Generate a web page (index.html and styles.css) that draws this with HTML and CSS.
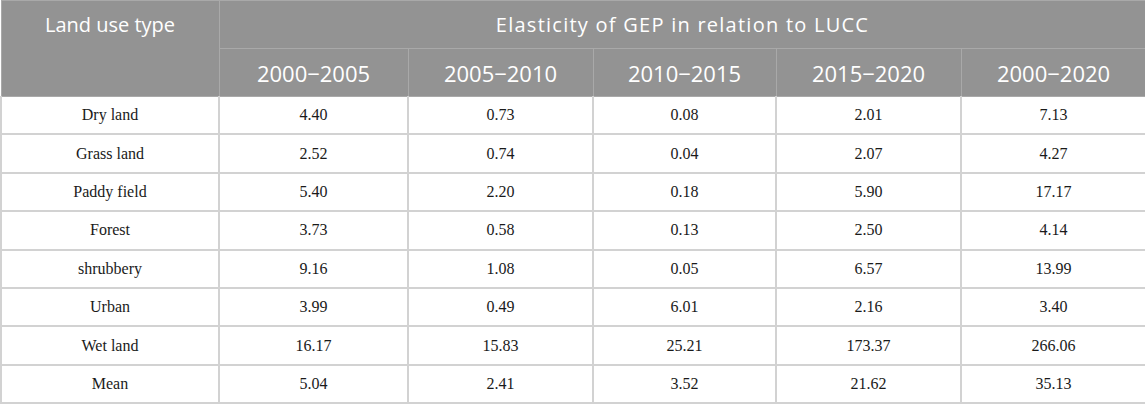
FILE: index.html
```html
<!DOCTYPE html>
<html lang="en">
<head>
<meta charset="utf-8">
<title>Elasticity of GEP in relation to LUCC</title>
<link rel="stylesheet" href="styles.css">
</head>
<body>
<table class="data-table">
  <colgroup>
    <col class="col-type">
    <col class="col-a">
    <col class="col-b">
    <col class="col-c">
    <col class="col-d">
    <col class="col-e">
  </colgroup>
  <thead>
    <tr class="head-top">
      <th rowspan="2" class="type-head">Land use type</th>
      <th colspan="5" class="group-head">Elasticity of GEP in relation to LUCC</th>
    </tr>
    <tr class="head-sub">
      <th>2000−2005</th>
      <th>2005−2010</th>
      <th>2010−2015</th>
      <th>2015−2020</th>
      <th>2000−2020</th>
    </tr>
  </thead>
  <tbody>
    <tr><td>Dry land</td><td>4.40</td><td>0.73</td><td>0.08</td><td>2.01</td><td>7.13</td></tr>
    <tr><td>Grass land</td><td>2.52</td><td>0.74</td><td>0.04</td><td>2.07</td><td>4.27</td></tr>
    <tr><td>Paddy field</td><td>5.40</td><td>2.20</td><td>0.18</td><td>5.90</td><td>17.17</td></tr>
    <tr><td>Forest</td><td>3.73</td><td>0.58</td><td>0.13</td><td>2.50</td><td>4.14</td></tr>
    <tr><td>shrubbery</td><td>9.16</td><td>1.08</td><td>0.05</td><td>6.57</td><td>13.99</td></tr>
    <tr><td>Urban</td><td>3.99</td><td>0.49</td><td>6.01</td><td>2.16</td><td>3.40</td></tr>
    <tr><td>Wet land</td><td>16.17</td><td>15.83</td><td>25.21</td><td>173.37</td><td>266.06</td></tr>
    <tr><td>Mean</td><td>5.04</td><td>2.41</td><td>3.52</td><td>21.62</td><td>35.13</td></tr>
  </tbody>
</table>
</body>
</html>
```
FILE: styles.css
```css
html, body {
  margin: 0;
  padding: 0;
  background: #ffffff;
}

.data-table {
  border-collapse: collapse;
  table-layout: fixed;
  width: 1145px;
}

.col-type { width: 218px; }
.col-a { width: 189px; }
.col-b { width: 185px; }
.col-c { width: 183px; }
.col-d { width: 185px; }
.col-e { width: 185px; }

.data-table th {
  background: #939393;
  color: #ffffff;
  font-family: "Open Sans", "Noto Sans", sans-serif;
  font-weight: 400;
  text-align: center;
  padding: 0;
  border: 1px solid #a9a9a9;
}

.head-top th {
  height: 47px;
  font-size: 20px;
  vertical-align: middle;
}

.head-top th.type-head {
  vertical-align: top;
  padding-top: 10px;
}

.head-top th.group-head {
  letter-spacing: 1.25px;
}

.head-sub th {
  height: 47px;
  font-size: 22px;
}

.data-table td {
  font-family: "Liberation Serif", "Times New Roman", serif;
  font-size: 16px;
  color: #1a1a1a;
  text-align: center;
  padding: 0;
  height: 36.4px;
  border: 2px solid #d2d2d2;
}

.data-table tbody tr:first-child td {
  border-top: 0;
}
```
